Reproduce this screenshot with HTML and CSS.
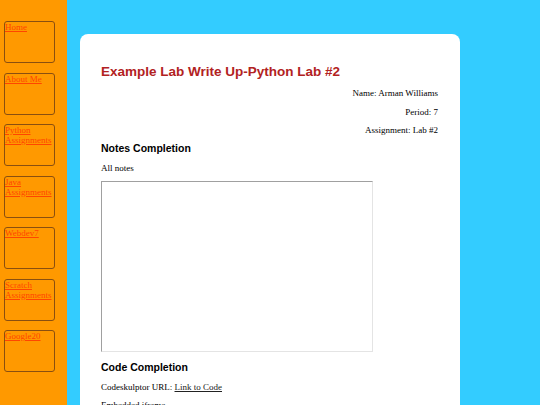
FILE: index.html
```html
<!DOCTYPE html>
<html>
<head>
<meta charset="utf-8">
<title>Example Lab Write Up</title>
<link rel="stylesheet" href="styles.css">
</head>
<body>
<div class="page">
  <nav class="sidebar">
    <div class="navbox"><a href="#">Home</a></div>
    <div class="navbox"><a href="#">About Me</a></div>
    <div class="navbox"><a href="#">Python Assignments</a></div>
    <div class="navbox"><a href="#">Java Assignments</a></div>
    <div class="navbox"><a href="#">Webdev7</a></div>
    <div class="navbox"><a href="#">Scratch Assignments</a></div>
    <div class="navbox"><a href="#">Google20</a></div>
  </nav>
  <main class="main">
    <div class="card">
      <h1 class="title">Example Lab Write Up-Python Lab #2</h1>
      <p class="info">Name: Arman Williams</p>
      <p class="info">Period: 7</p>
      <p class="info info-last">Assignment: Lab #2</p>
      <h3 class="section">Notes Completion</h3>
      <p class="text text-notes">All notes</p>
      <div class="frame"></div>
      <h3 class="section section-code">Code Completion</h3>
      <p class="text">Codeskulptor URL: <a class="code-link" href="#">Link to Code</a></p>
      <p class="text">Embedded iframe</p>
    </div>
  </main>
</div>
</body>
</html>
```
FILE: styles.css
```css
html, body {
  margin: 0;
  padding: 0;
  height: 100%;
  overflow: hidden;
}
body {
  background: #33ccff;
  font-family: "Liberation Serif", "Times New Roman", serif;
  font-size: 9px;
  color: #000;
}
.page {
  display: flex;
  min-height: 100%;
}
.sidebar {
  width: 67px;
  flex: 0 0 67px;
  background: #ff9900;
  padding: 21px 0 0 4px;
  box-sizing: border-box;
  display: flex;
  flex-direction: column;
  gap: 9.5px;
}
.navbox {
  width: 51px;
  height: 42px;
  box-sizing: border-box;
  border: 1px solid #8a4f10;
  border-radius: 3px;
  line-height: 10px;
}
.navbox a {
  color: #ff4500;
  text-decoration: underline;
}
.main {
  flex: 1;
  padding: 34px 80px 0 13px;
}
.card {
  background: #fff;
  border-radius: 8px 8px 0 0;
  padding: 30px 22px 40px 21px;
  min-height: 400px;
}
.title {
  font-family: "Liberation Sans", Arial, sans-serif;
  font-size: 13.5px;
  line-height: 16px;
  color: #b22222;
  margin: 0 0 8px;
  font-weight: bold;
}
.info {
  text-align: right;
  margin: 0 0 8.5px;
  line-height: 10px;
}
.info-last {
  margin-bottom: 7px;
}
.section {
  font-family: "Liberation Sans", Arial, sans-serif;
  font-size: 10.5px;
  line-height: 12px;
  font-weight: bold;
  color: #000;
  margin: 0 0 9px;
}
.section-code {
  margin-bottom: 9px;
}
.text {
  margin: 0 0 8.5px;
  line-height: 10px;
}
.text-notes {
  margin-bottom: 7.5px;
}
.frame {
  width: 272px;
  height: 171px;
  box-sizing: border-box;
  border-top: 1.5px solid #a0a0a0;
  border-left: 1.5px solid #a0a0a0;
  border-right: 1px solid #e4e4e4;
  border-bottom: 1px solid #e4e4e4;
  margin: 0 0 9px;
}
.code-link {
  color: #222;
  text-decoration: underline;
}
```
